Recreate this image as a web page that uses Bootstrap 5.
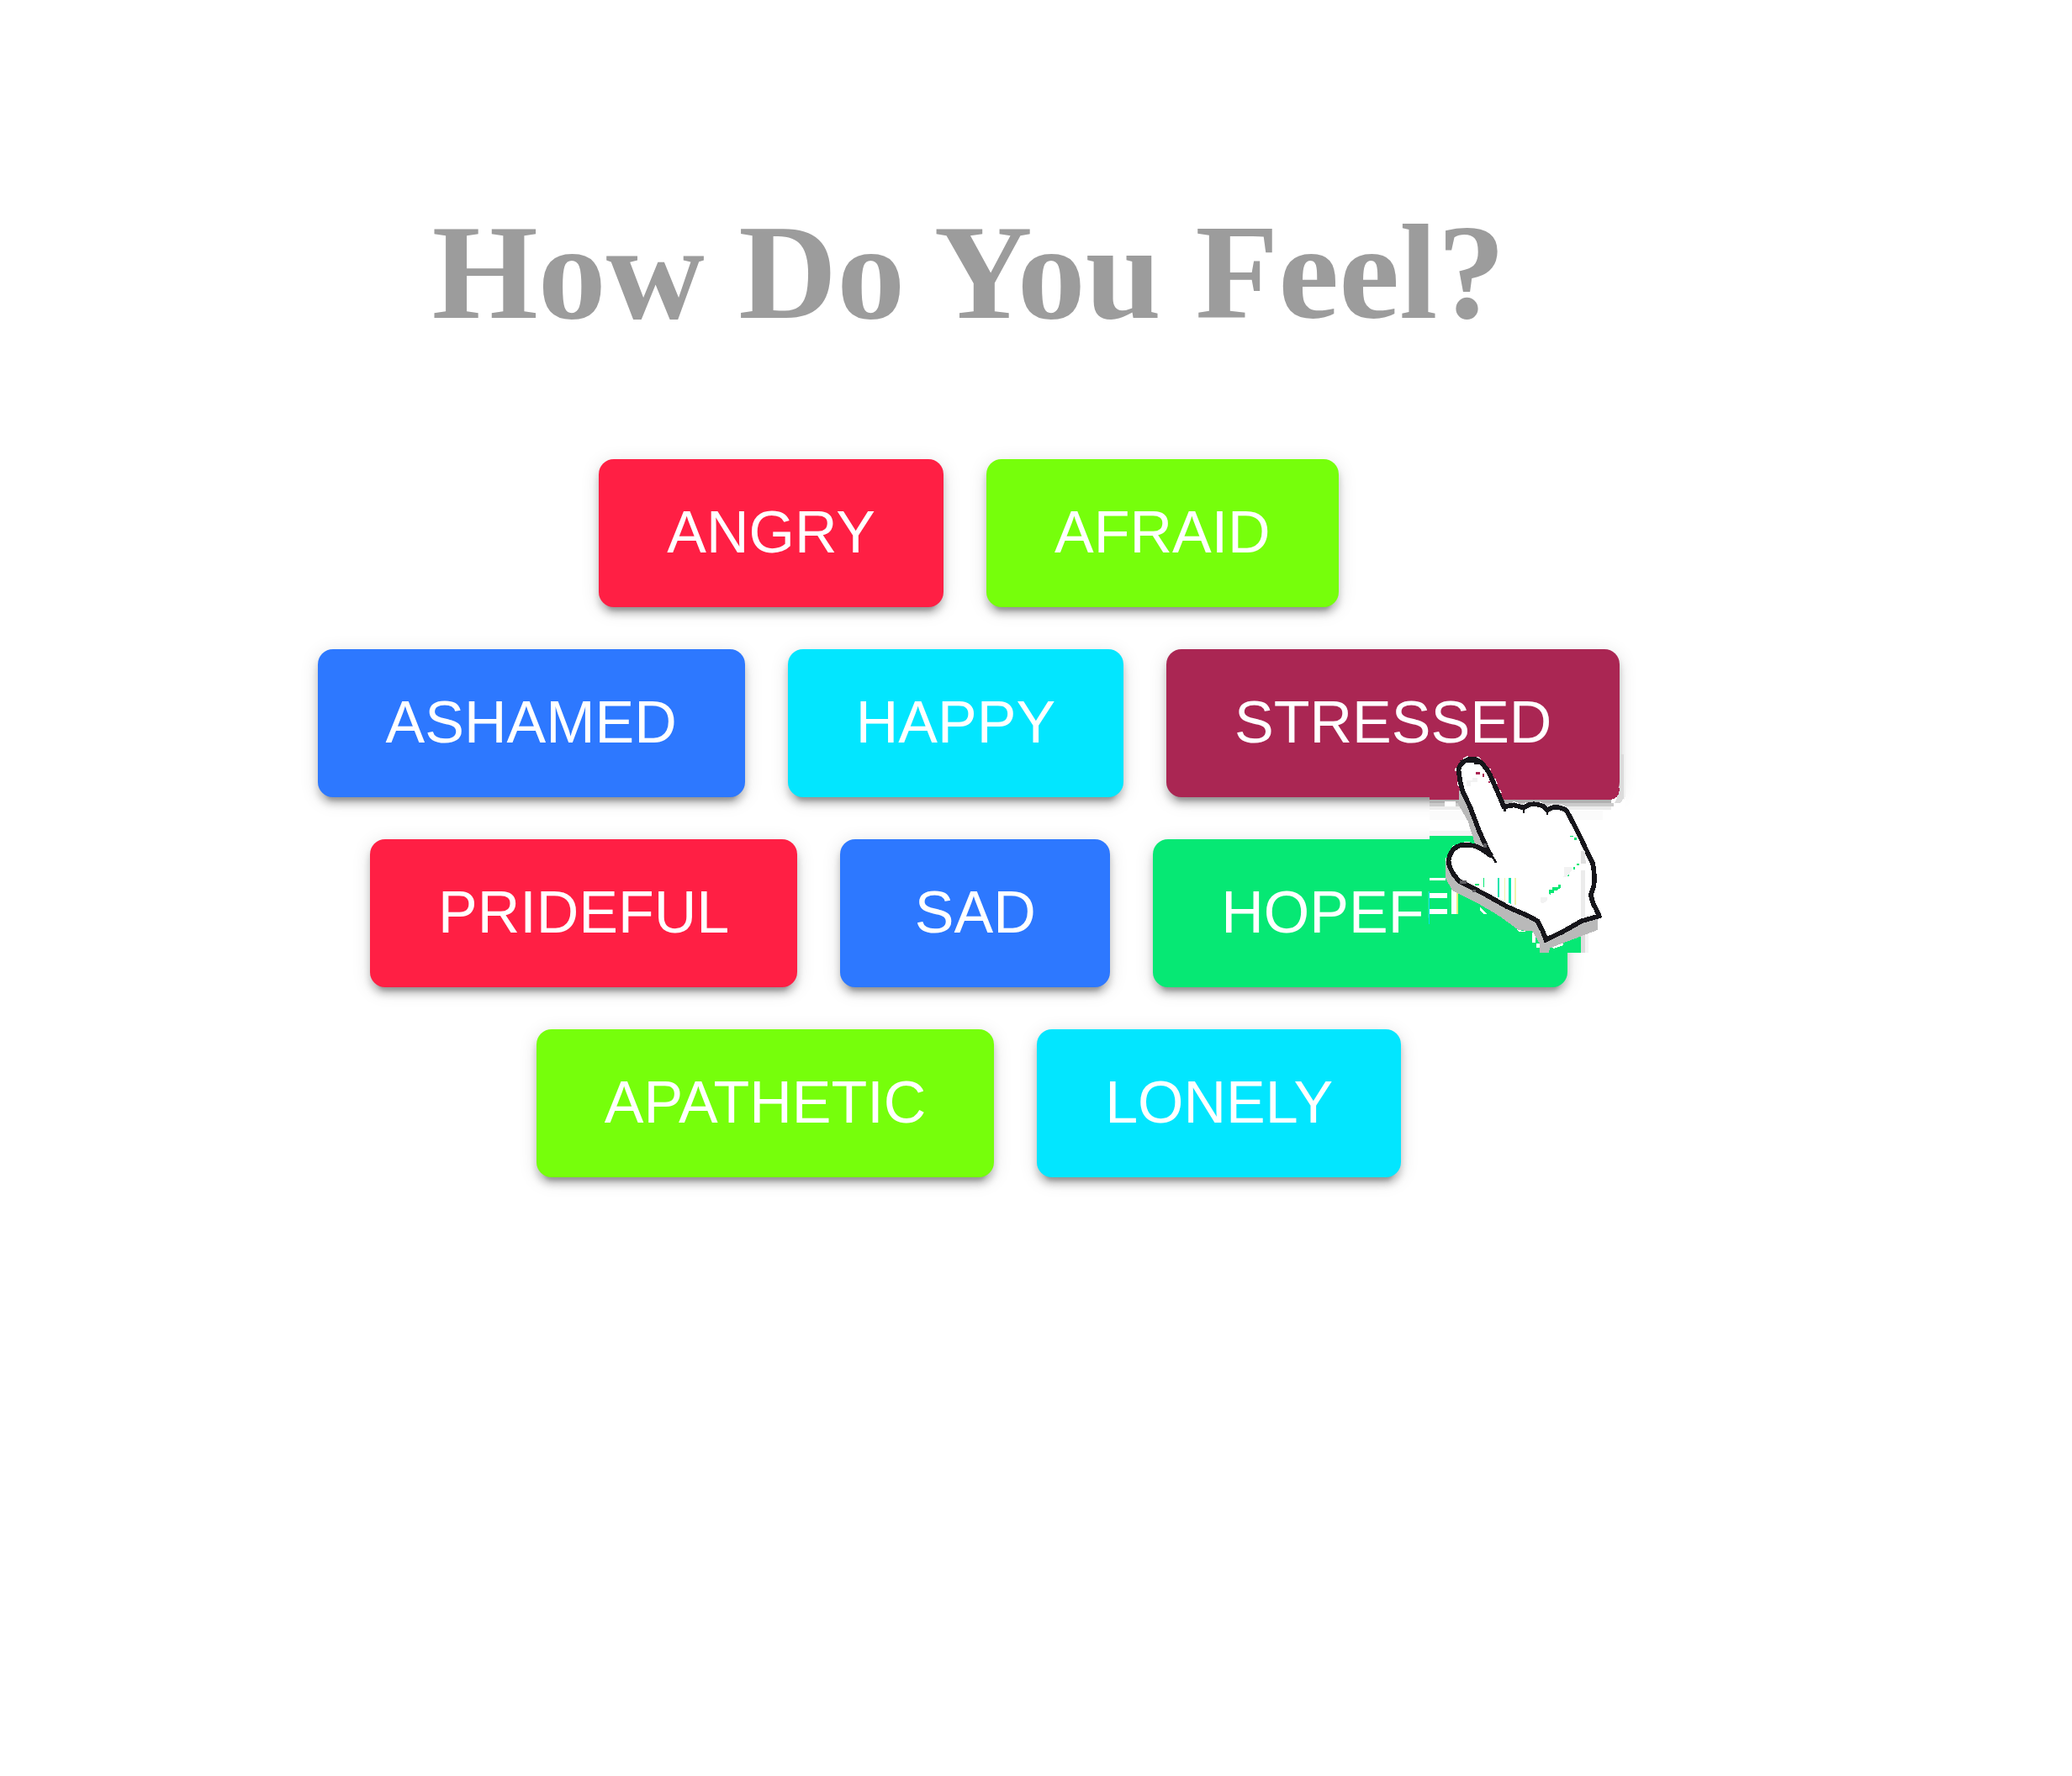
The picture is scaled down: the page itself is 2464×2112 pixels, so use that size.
<!DOCTYPE html>
<html lang="en">
<head>
<meta charset="utf-8">
<meta name="viewport" content="width=device-width, initial-scale=1">
<title>How Do You Feel?</title>
<link href="https://cdn.jsdelivr.net/npm/bootstrap@5.3.0/dist/css/bootstrap.min.css" rel="stylesheet">
<style>
  body { background: #fff; font-family: "Liberation Sans", Arial, sans-serif; }
  .feel-page { padding: 228px 160px 160px 0; }
  .feel-title {
    font: bold 162px/192px "Liberation Serif", "Times New Roman", serif;
    color: #9c9c9c; margin: 0 0 126px;
  }
  .feel-rows { gap: 50px; }
  .feel-row { gap: 51px; }
  .feel-btn {
    --bs-btn-color: #fff; --bs-btn-hover-color: #fff; --bs-btn-active-color: #fff;
    --bs-btn-bg: var(--feel); --bs-btn-hover-bg: #aa2653; --bs-btn-active-bg: #aa2653;
    font-size: 70px; line-height: 80px; padding: 47px 81px 49px; min-width: 321px;
    border: 0; border-radius: 18px;
    box-shadow: 0 8px 9px rgba(0,0,0,.2), 0 13px 4px -9px rgba(0,0,0,.2), 0 4px 22px rgba(0,0,0,.13);
  }
  .feel-red { --feel: #ff1f44; }
  .feel-lime { --feel: #76ff0b; }
  .feel-blue { --feel: #2d78ff; }
  .feel-cyan { --feel: #02e6ff; }
  .feel-green { --feel: #06e874; }
  .feel-wine { --feel: #aa2653; }
  .hand-pointer { top: 124px; right: -7px; width: 234px; height: 238px; z-index: 2; pointer-events: none; }
</style>
<script src="https://cdn.jsdelivr.net/npm/bootstrap@5.3.0/dist/js/bootstrap.bundle.min.js" defer></script>
</head>
<body>
<main class="feel-page text-center">
  <h1 class="feel-title">How Do You Feel?</h1>
  <div class="feel-rows d-flex flex-column">
    <div class="feel-row d-flex flex-wrap justify-content-center">
      <button type="button" class="btn feel-btn feel-red">ANGRY</button>
      <button type="button" class="btn feel-btn feel-lime">AFRAID</button>
    </div>
    <div class="feel-row d-flex flex-wrap justify-content-center">
      <button type="button" class="btn feel-btn feel-blue">ASHAMED</button>
      <button type="button" class="btn feel-btn feel-cyan">HAPPY</button>
      <div class="position-relative">
        <button type="button" class="btn feel-btn feel-wine">STRESSED</button>
        <svg class="hand-pointer position-absolute" viewBox="120 108 702 714" shape-rendering="crispEdges" aria-hidden="true">
          <defs>
            <path id="hand" d="M345 475 L333 458 L300 385 L268 300 L240 240 L232 205 L226 165 Q232 142 255 132 Q278 120 303 138 Q330 158 350 210 L370 255 L388 298 L425 292 L458 302 L475 292 Q500 284 528 296 L543 310 L560 301 Q595 297 613 314 L640 365 L665 415 L690 470 L705 500 Q714 540 709 580 L698 612 L706 642 L718 665 L728 688 L665 706 L600 743 L538 773 L527 742 L508 706 L480 690 L400 655 L320 610 L228 563 L208 538 Q185 500 193 480 Q200 446 235 435 Q280 430 310 450 Z"/>
          </defs>
          <path fill="#fff" d="M123 264 H822 V402 H123z"/>
          <path fill="#dcdcdc" d="M801 111 h16 v155 l-14 20 h-20 l18 -40z"/>
          <path fill="#f2f2f2" d="M817 111 h5 v150 l-5 12z"/>
          <path fill="#fbfbfb" d="M123 312 H740 V345 H123z"/>
          <path fill="#f5f5f5" d="M123 385 H663 V402 H123z"/>
          <path fill="#b1b1b1" d="M123 273 H770 V284 H123z"/>
          <path fill="#cbcbcb" d="M123 284 H780 V297 H123z"/>
          <path fill="#ededed" d="M123 297 H770 V309 H123z"/>
          <path fill="#aa2653" d="M123 230 H801 V237 Q799 268 770 273 H123z"/>
          <path fill="#06e874" d="M123 402 H663 V819 H123z"/>
          <path fill="#dcdcdc" d="M663 455 H679 V819 H663z"/>
          <path fill="#f5f5f5" d="M679 455 H690 V819 H679z"/>
          <path fill="#fff" d="M123 551h58v9h-58z M123 605h62v20h-62z M123 663h62v18h-62z M202 590h18v92h-18z M178 280h38v18h-38z"/>
          <path fill="#06dff0" d="M116 600h6v118h-6z"/>
          <path fill="#dff27a" d="M220 596h5v86h-5z M486 665h4v17h-4z"/>
          <path fill="#fff" d="M303 655 l25 25 h-12 l-13 -13z"/>
          <use href="#hand" fill="none" stroke="#fff" stroke-width="24" stroke-dasharray="14 41 7 33 19 24"/>
          <path fill="#fff" d="M436 736l30 7h-26z M490 748h10v36h-10z M505 785h10v15h-10z M560 795l40 -10v8l-36 12z"/>
          <path fill="#b9b9b9" d="M229 240 L226 290 L260 350 L285 430 L340 460 L270 280z"/>
          <path fill="#b9b9b9" d="M181 490 V555 L205 598 L300 645 L375 690 L440 738 L490 742 L515 785 V819 H548 L553 802 L722 738 V690 L538 770 L500 710 L225 565z"/>
          <use href="#hand" fill="#fff" stroke="#16151a" stroke-width="17"/>
          <path fill="none" stroke="#16151a" stroke-width="7" d="M340 470 L358 492 V498 M391 300V316 M459 300V320 M543 306V328"/>
          <path fill="#16151a" d="M330 440l26 44-26-10z M232 132h70v14h-20v-6h-34l-12 14z"/>
          <path fill="#5d5c61" d="M232 560h24v14h-24z M314 430h12v14h-12z M275 594h14v10h-14z"/>
          <path fill="#aa2653" d="M289 174h13v9h-13z M312 180h5v11h-5z M257 221h5v5h-5z M333 207h5v6h-5z"/>
          <path fill="#06e5ad" d="M366 551h6v72l-6-3z M405 551h9v94l-9-4z"/>
          <path fill="#eff5ab" d="M390 551h4v82h-4z M426 551h6v98h-6z"/>
          <path fill="#06e874" d="M315 551h4v34h-4z M284 573h16v7h-16z M548 608v-14h12v-8h22v-9h9v9l-14 11h-9v8h-12v8z M613 545h8v-9h-8z M636 521h6v-9h-6z M647 508h9v-6h-9z M623 402h14v4h-14z M638 407h10v9h-10z"/>
          <path fill="#f2f2f2" d="M520 640v-18h22v10l-14 12z M603 536v-22h26v14l-18 22h-10z M255 205h20v-9h20v14h-25v14h-15z"/>
          <path fill="#dfdfdf" d="M663 455h14v28l4 10v7h-18z"/>
          <path fill="#ececec" d="M663 524h16v166h-16z"/>
        </svg>
      </div>
    </div>
    <div class="feel-row d-flex flex-wrap justify-content-center">
      <button type="button" class="btn feel-btn feel-red">PRIDEFUL</button>
      <button type="button" class="btn feel-btn feel-blue">SAD</button>
      <button type="button" class="btn feel-btn feel-green">HOPEFUL</button>
    </div>
    <div class="feel-row d-flex flex-wrap justify-content-center">
      <button type="button" class="btn feel-btn feel-lime">APATHETIC</button>
      <button type="button" class="btn feel-btn feel-cyan">LONELY</button>
    </div>
  </div>
</main>
</body>
</html>
